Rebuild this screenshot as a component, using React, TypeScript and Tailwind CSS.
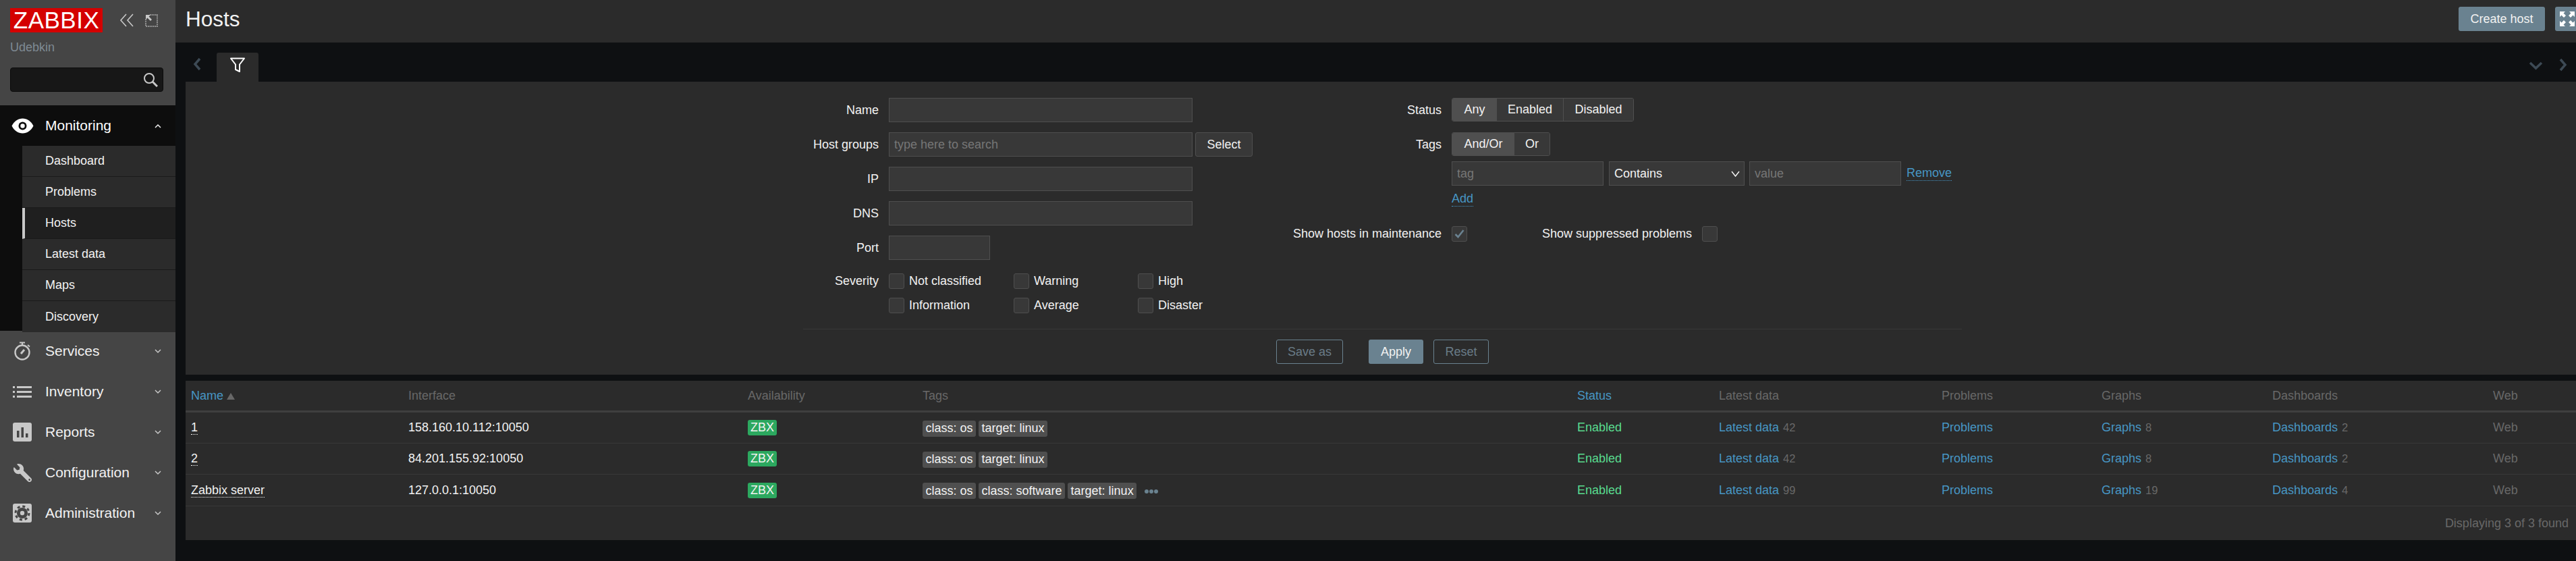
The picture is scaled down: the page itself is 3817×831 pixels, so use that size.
import React from 'react';
import { FaWrench } from 'react-icons/fa';

const FONT = { fontFamily: '"Liberation Sans", Arial, sans-serif' };

const subItems = [
  { label: 'Dashboard' },
  { label: 'Problems' },
  { label: 'Hosts', active: true },
  { label: 'Latest data' },
  { label: 'Maps' },
  { label: 'Discovery' },
];

const hosts = [
  { name: '1', ip: '158.160.10.112:10050', tags: ['class: os', 'target: linux'], latest: 42, graphs: 8, dashboards: 2 },
  { name: '2', ip: '84.201.155.92:10050', tags: ['class: os', 'target: linux'], latest: 42, graphs: 8, dashboards: 2 },
  { name: 'Zabbix server', ip: '127.0.0.1:10050', tags: ['class: os', 'class: software', 'target: linux'], more: true, latest: 99, graphs: 19, dashboards: 4 },
];

const GRID = 'grid grid-cols-[322px_503px_259px_970px_210px_330px_237px_253px_327px_131px] items-center';

const Chevron = ({ up }: { up?: boolean }) => (
  <svg width="10" height="7" viewBox="0 0 10 7" fill="none" stroke={up ? '#f2f2f2' : '#c8c8c8'} strokeWidth="1.5">
    <path d={up ? 'M1 6l4-4 4 4' : 'M1 1l4 4 4-4'} />
  </svg>
);

const EyeIcon = () => (
  <svg width="33" height="23" viewBox="0 0 33 23">
    <path d="M0.5 11.5C4.5 4 10 0.5 16.5 0.5S28.5 4 32.5 11.5C28.5 19 23 22.5 16.5 22.5S4.5 19 0.5 11.5Z" fill="#fff" />
    <circle cx="16.5" cy="11.5" r="6" fill="#0d0d0d" />
    <circle cx="16.5" cy="11.5" r="3.2" fill="#fff" />
  </svg>
);

const TimerIcon = () => (
  <svg width="27" height="28" viewBox="0 0 27 28" fill="none" stroke="#c8c8c8">
    <circle cx="13" cy="16" r="10.5" strokeWidth="2.4" />
    <path d="M9 1.5h8M13 1.5v4" strokeWidth="2.2" />
    <path d="M21 5l3 2.5" strokeWidth="2" />
    <path d="M11 18l5-6" strokeWidth="3" />
  </svg>
);

const ListIcon = () => (
  <svg width="28" height="17" viewBox="0 0 28 17" fill="#c8c8c8">
    <rect x="0" y="0" width="3" height="3" />
    <rect x="6" y="0" width="22" height="3" />
    <rect x="0" y="7" width="3" height="3" />
    <rect x="6" y="7" width="22" height="3" />
    <rect x="0" y="14" width="3" height="3" />
    <rect x="6" y="14" width="22" height="3" />
  </svg>
);

const ReportsIcon = () => (
  <svg width="28" height="28" viewBox="0 0 28 28">
    <rect width="28" height="28" rx="3" fill="#c8c8c8" />
    <rect x="6" y="12" width="3.5" height="10" fill="#454545" />
    <rect x="12.5" y="7" width="3.5" height="15" fill="#454545" />
    <rect x="19" y="16" width="3.5" height="6" fill="#454545" />
  </svg>
);

const GearIcon = () => (
  <svg width="28" height="28" viewBox="0 0 28 28">
    <rect width="28" height="28" rx="3" fill="#c8c8c8" />
    <circle cx="14" cy="14" r="8" fill="#454545" />
    <circle cx="14" cy="14" r="10" fill="none" stroke="#454545" strokeWidth="3" strokeDasharray="4 3.85" />
    <circle cx="14" cy="14" r="3.2" fill="#c8c8c8" />
  </svg>
);

const menu = [
  { label: 'Services', icon: <TimerIcon /> },
  { label: 'Inventory', icon: <ListIcon /> },
  { label: 'Reports', icon: <ReportsIcon /> },
  { label: 'Configuration', icon: <FaWrench size={27} color="#c8c8c8" className="-scale-x-100" /> },
  { label: 'Administration', icon: <GearIcon /> },
];

const Sidebar = () => (
  <aside className="w-[260px] h-full shrink-0 bg-[#454545] flex flex-col">
    <div className="h-[156px] pl-[15px] pt-[12px]">
      <div className="flex items-center">
        <div className="w-[137px] h-[36px] bg-[#d40000] text-white text-[35px] leading-[36px] text-center tracking-[0.5px]">ZABBIX</div>
        <svg width="22" height="20" viewBox="0 0 22 20" fill="none" stroke="#c8c8c8" strokeWidth="1.6" className="ml-[25px]">
          <path d="M10 1L2 10l8 9M20 1l-8 9 8 9" />
        </svg>
        <svg width="19" height="19" viewBox="0 0 19 19" fill="none" className="ml-[16px]">
          <path d="M7 1h11v17H1V7" stroke="#c8c8c8" strokeWidth="1.4" strokeDasharray="1.5 1.2" />
          <path d="M1 1h7L5.6 3.4 10 8 8 10 3.4 5.6 1 8Z" fill="#c8c8c8" />
        </svg>
      </div>
      <div className="text-[18px] leading-[21px] mt-[12px] text-[#7f8a94]">Udebkin</div>
      <div className="mt-[19px] w-[227px] h-[36px] bg-[#171717] border border-[#0b0b0b] rounded-[4px] flex items-center justify-end pr-[7px]">
        <svg width="22" height="22" viewBox="0 0 22 22" fill="none" stroke="#c8c8c8">
          <circle cx="9" cy="9" r="7" strokeWidth="2" />
          <path d="M14 14l7 7" strokeWidth="3" />
        </svg>
      </div>
    </div>
    <div className="h-[60px] bg-[#0d0d0d] flex items-center">
      <div className="w-[67px] pl-[17px] flex"><EyeIcon /></div>
      <span className="text-[21px] text-white flex-1">Monitoring</span>
      <span className="flex pr-[21px]"><Chevron up /></span>
    </div>
    <div className="h-[274px] bg-[#0d0d0d] pl-[33px]">
      {subItems.map((item, i) => (
        <div
          key={item.label}
          className={`h-[46px] flex items-center text-[18px] text-[#f2f2f2] ${i === 0 ? 'h-[45px]' : ''} ${i === 5 ? 'h-[45px]' : 'border-b border-[#1a1a1a]'} ${item.active ? 'bg-[#1f1f1f] border-l-4 border-l-[#c8c8c8] pl-[30px]' : 'bg-[#2b2b2b] pl-[34px]'}`}
        >
          {item.label}
        </div>
      ))}
    </div>
    {menu.map((item) => (
      <div key={item.label} className="h-[60px] flex items-center">
        <div className="w-[67px] flex justify-center pr-[1px]">{item.icon}</div>
        <span className="text-[21px] text-[#f2f2f2] flex-1">{item.label}</span>
        <span className="flex pr-[21px]"><Chevron /></span>
      </div>
    ))}
  </aside>
);

const Label = ({ children, className = 'w-[112px]' }: { children: React.ReactNode; className?: string }) => (
  <div className={`${className} shrink-0 text-right text-[18px] text-[#f2f2f2] mr-[15px] whitespace-nowrap`}>{children}</div>
);

const TextBox = ({ width, placeholder }: { width: string; placeholder?: string }) => (
  <div className={`${width} h-[36px] bg-[#383838] border border-[#4f4f4f] flex items-center pl-[7px] text-[18px] text-[#767676]`}>{placeholder}</div>
);

const Check = ({ label, checked }: { label?: string; checked?: boolean }) => (
  <div className="flex items-center h-[23px] text-[18px] text-[#f2f2f2]">
    <div className="w-[23px] h-[23px] bg-[#383838] border border-[#4f4f4f] rounded-[3px] flex items-center justify-center">
      {checked && (
        <svg width="15" height="13" viewBox="0 0 15 13" fill="none" stroke="#6a8290" strokeWidth="2.6">
          <path d="M1.5 7l4 4 8-10" />
        </svg>
      )}
    </div>
    {label && <span className="ml-[7px]">{label}</span>}
  </div>
);

const Segment = ({ items }: { items: { label: string; width: string; active?: boolean }[] }) => (
  <div className="flex self-start h-[35px] border border-[#4f4f4f] rounded-[3px] overflow-hidden">
    {items.map((s, i) => (
      <div
        key={s.label}
        className={`${s.width} flex items-center justify-center text-[18px] text-[#f2f2f2] ${s.active ? 'bg-[#4f4f4f]' : 'bg-[#383838]'} ${i > 0 && !items[i - 1].active ? 'border-l border-[#4f4f4f]' : ''}`}
      >
        {s.label}
      </div>
    ))}
  </div>
);

const OutlineButton = ({ label, width, className = '' }: { label: string; width: string; className?: string }) => (
  <div className={`${width} ${className} h-[36px] border border-[#6a8290] rounded-[3px] flex items-center justify-center text-[18px] text-[#6a7c88]`}>{label}</div>
);

const DottedLink = ({ children }: { children: React.ReactNode }) => (
  <span className="text-[18px] leading-[21px] text-[#4796c4] border-b border-dotted border-[#4796c4]">{children}</span>
);

const FilterPanel = () => (
  <div className="h-[434px] bg-[#2b2b2b] pt-[24px] pl-[915px]">
    <div className="w-[1717px]">
      <div className="flex h-[342px]">
        <div className="w-[726px] shrink-0">
          {['Name', 'Host groups', 'IP', 'DNS'].map((label) => (
            <div key={label} className="flex items-center h-[36px] mb-[15px]">
              <Label>{label}</Label>
              <TextBox width="w-[450px]" placeholder={label === 'Host groups' ? 'type here to search' : undefined} />
              {label === 'Host groups' && (
                <div className="ml-[4px] w-[85px] h-[36px] bg-[#383838] border border-[#4f4f4f] rounded-[3px] flex items-center justify-center text-[18px] text-[#f2f2f2]">Select</div>
              )}
            </div>
          ))}
          <div className="flex items-center h-[36px] mb-[20px]">
            <Label>Port</Label>
            <TextBox width="w-[150px]" />
          </div>
          <div className="flex">
            <Label>
              <span className="leading-[23px] block">Severity</span>
            </Label>
            <div className="grid grid-cols-[185px_184px_184px] gap-y-[13px]">
              {['Not classified', 'Warning', 'High', 'Information', 'Average', 'Disaster'].map((s) => (
                <Check key={s} label={s} />
              ))}
            </div>
          </div>
        </div>
        <div>
          <div className="flex items-center h-[36px] mb-[15px]">
            <Label className="w-[220px]">Status</Label>
            <Segment
              items={[
                { label: 'Any', width: 'w-[66px]', active: true },
                { label: 'Enabled', width: 'w-[98px]' },
                { label: 'Disabled', width: 'w-[104px]' },
              ]}
            />
          </div>
          <div className="flex items-center h-[36px] mb-[7px]">
            <Label className="w-[220px]">Tags</Label>
            <Segment
              items={[
                { label: 'And/Or', width: 'w-[92px]', active: true },
                { label: 'Or', width: 'w-[52px]' },
              ]}
            />
          </div>
          <div className="pl-[235px] flex items-center h-[36px]">
            <TextBox width="w-[225px]" placeholder="tag" />
            <div className="ml-[8px] w-[201px] h-[36px] bg-[#383838] border border-[#4f4f4f] flex items-center justify-between px-[7px] text-[18px] text-[#f2f2f2]">
              Contains
              <svg width="13" height="9" viewBox="0 0 13 9" fill="none" stroke="#f2f2f2" strokeWidth="1.5" className="-mr-[1px]">
                <path d="M1 1l5.5 7L12 1" />
              </svg>
            </div>
            <div className="ml-[7px]"><TextBox width="w-[225px]" placeholder="value" /></div>
            <div className="ml-[8px] flex"><DottedLink>Remove</DottedLink></div>
          </div>
          <div className="pl-[235px] mt-[9px] h-[21px] flex items-start"><DottedLink>Add</DottedLink></div>
          <div className="flex items-center h-[23px] mt-[30px]">
            <Label className="w-[220px]">Show hosts in maintenance</Label>
            <Check checked />
            <div className="ml-[111px] mr-[15px] text-[18px] text-[#f2f2f2]">Show suppressed problems</div>
            <Check />
          </div>
        </div>
      </div>
      <div className="border-t border-[#383838] pt-[15px] pl-[701px] flex">
        <OutlineButton label="Save as" width="w-[99px]" />
        <div className="ml-[38px] w-[81px] h-[36px] bg-[#6a8290] rounded-[3px] flex items-center justify-center text-[18px] text-[#f2f2f2]">Apply</div>
        <OutlineButton label="Reset" width="w-[82px]" className="ml-[15px]" />
      </div>
    </div>
  </div>
);

const Muted = ({ children }: { children: React.ReactNode }) => (
  <span className="text-[#686868] text-[16.5px] ml-[6px]">{children}</span>
);

const HostsTable = () => (
  <div className="mt-[9px] h-[236px] bg-[#2b2b2b] text-[18px]">
    <div className={`${GRID} h-[47px] border-b-[3px] border-[#3f3f3f] text-[#686868] [&>div]:pl-[8px]`}>
      <div className="flex items-center">
        <span className="text-[#4796c4]">Name</span>
        <svg width="12" height="10" viewBox="0 0 12 10" fill="#686868" className="ml-[5px] mt-[2px]">
          <path d="M6 0l6 10H0z" />
        </svg>
      </div>
      <div>Interface</div>
      <div>Availability</div>
      <div>Tags</div>
      <div className="text-[#4796c4]">Status</div>
      <div>Latest data</div>
      <div>Problems</div>
      <div>Graphs</div>
      <div>Dashboards</div>
      <div>Web</div>
    </div>
    {hosts.map((host, i) => (
      <div key={host.name} className={`${GRID} ${i === 2 ? 'h-[47px]' : 'h-[46px]'} border-b border-[#383838] text-[#f2f2f2] [&>div]:pl-[8px]`}>
        <div>
          <span className="border-b border-dotted border-[#f2f2f2]">{host.name}</span>
        </div>
        <div>{host.ip}</div>
        <div className="flex">
          <span className="w-[43px] h-[23px] bg-[#2ca85f] rounded-[3px] flex items-center justify-center text-[#f2f2f2]">ZBX</span>
        </div>
        <div className="flex items-center gap-[4px] mt-[2px]">
          {host.tags.map((tag) => (
            <span key={tag} className="h-[24px] px-[4.5px] bg-[#4f4f4f] rounded-[3px] flex items-center text-[#f2f2f2]">{tag}</span>
          ))}
          {host.more && (
            <svg width="20" height="8" viewBox="0 0 20 8" fill="#6a8290" className="ml-[8px] mt-[2px]">
              <circle cx="3" cy="4" r="3" />
              <circle cx="10" cy="4" r="3" />
              <circle cx="17" cy="4" r="3" />
            </svg>
          )}
        </div>
        <div className="text-[#59db8f]">Enabled</div>
        <div>
          <span className="text-[#4796c4]">Latest data</span>
          <Muted>{host.latest}</Muted>
        </div>
        <div className="text-[#4796c4]">Problems</div>
        <div>
          <span className="text-[#4796c4]">Graphs</span>
          <Muted>{host.graphs}</Muted>
        </div>
        <div>
          <span className="text-[#4796c4]">Dashboards</span>
          <Muted>{host.dashboards}</Muted>
        </div>
        <div className="text-[#686868]">Web</div>
      </div>
    ))}
    <div className="h-[50px] flex items-center justify-end pr-[11px] text-[#686868]">Displaying 3 of 3 found</div>
  </div>
);

const App = () => (
  <div className="w-[3817px] h-[831px] overflow-hidden flex bg-[#0e1012]" style={FONT}>
    <Sidebar />
    <main className="flex-1 min-w-0">
      <header className="h-[63px] bg-[#2b2b2b] pl-[15px] flex items-start relative">
        <h1 className="text-[31.5px] leading-[57px] text-[#f2f2f2]">Hosts</h1>
        <div className="ml-auto mt-[10px] flex">
          <div className="w-[128px] h-[36px] bg-[#6a8290] rounded-[3px] flex items-center justify-center text-[18px] text-[#f2f2f2]">Create host</div>
          <div className="ml-[15px] -mr-[5px] w-[36px] h-[36px] bg-[#6a8290] rounded-[3px] flex items-center justify-center">
            <svg width="22" height="22" viewBox="0 0 22 22" fill="#fff">
              <path d="M0 0h8L5.5 2.500 9 6 6 9 2.500 5.500 0 8ZM22 0v8l-2.500-2.500L16 9l-3-3 3.500-3.500L14 0ZM0 22v-8l2.500 2.500L6 13l3 3-3.500 3.500L8 22ZM22 22h-8l2.500-2.500L13 16l3-3 3.500 3.500L22 14Z" />
            </svg>
          </div>
        </div>
      </header>
      <div className="h-[58px] flex items-end relative">
        <svg width="12" height="20" viewBox="0 0 12 20" fill="none" stroke="#3d4a55" strokeWidth="3.5" className="self-center ml-[26px] mt-[5px]">
          <path d="M10 2l-7 8 7 8" />
        </svg>
        <div className="ml-[23px] w-[62px] h-[43px] bg-[#2b2b2b] rounded-t-[3px] flex justify-center pt-[7px]">
          <svg width="22" height="22" viewBox="0 0 22 22" fill="none" stroke="#fff" strokeWidth="2" strokeLinejoin="round">
            <path d="M1 1.5h20L14 10.5v10.5l-6-3v-7.500Z" />
          </svg>
        </div>
        <svg width="21" height="13" viewBox="0 0 21 13" fill="none" stroke="#3d4a55" strokeWidth="3.5" className="absolute right-[49px] top-[28px]">
          <path d="M2 2l8.500 8L19 2" />
        </svg>
        <svg width="12" height="20" viewBox="0 0 12 20" fill="none" stroke="#3d4a55" strokeWidth="3.5" className="absolute right-[13px] top-[23px]">
          <path d="M2 2l7 8-7 8" />
        </svg>
      </div>
      <div className="ml-[15px]">
        <FilterPanel />
        <HostsTable />
      </div>
    </main>
  </div>
);

export default App;
